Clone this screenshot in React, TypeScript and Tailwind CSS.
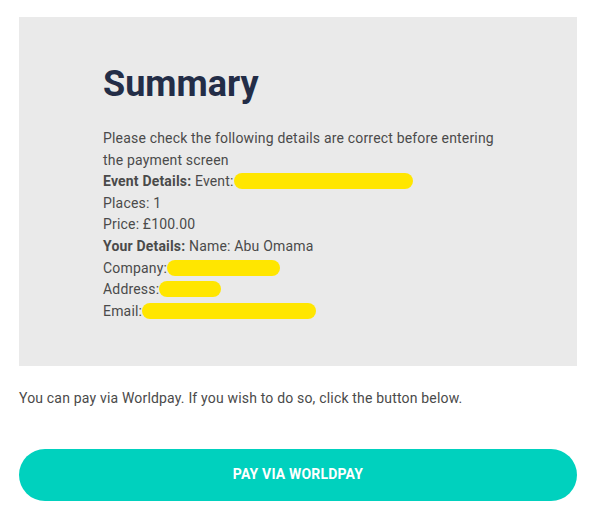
import * as React from "react";

function Redact({ w }: { w: number }) {
  return (
    <span
      className="inline-block h-[16px] rounded-full bg-[#ffe600] align-[-3px]"
      style={{ width: w }}
    />
  );
}

export default function App() {
  return (
    <div className="min-h-screen bg-white font-['Roboto',sans-serif] text-[#4a4a4a]">
      <div className="ml-[19px] w-[558px] pt-[17px]">
        <section className="bg-[#eaeaea] pl-[84px] pr-[70px] pt-[46px] pb-[44px]">
          <h1 className="text-[36px] font-bold leading-[43px] text-[#232d47]">Summary</h1>
          <div className="mt-[22px] text-[14px] leading-[21.6px] tracking-[0.18px]">
            <p>Please check the following details are correct before entering the payment screen</p>
            <p>
              <strong className="font-bold">Event Details:</strong> Event:
              <Redact w={179} />
            </p>
            <p>Places: 1</p>
            <p>Price: £100.00</p>
            <p>
              <strong className="font-bold">Your Details:</strong> Name: Abu Omama
            </p>
            <p>
              Company:
              <Redact w={113} />
            </p>
            <p>
              Address:
              <Redact w={62} />
            </p>
            <p>
              Email:
              <Redact w={174} />
            </p>
          </div>
        </section>

        <p className="mt-[22px] text-[14px] leading-[21.6px] tracking-[0.18px]">
          You can pay via Worldpay. If you wish to do so, click the button below.
        </p>

        <button className="mt-[39px] flex h-[52px] w-full items-center justify-center rounded-full bg-[#00d1be] text-[14px] font-bold uppercase tracking-[0.18px] text-white">
          Pay via Worldpay
        </button>
      </div>
    </div>
  );
}
